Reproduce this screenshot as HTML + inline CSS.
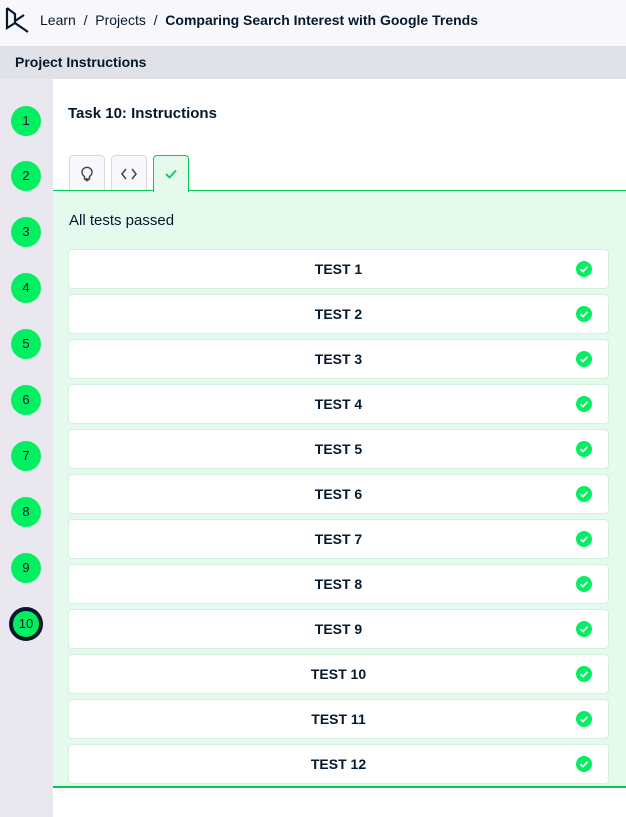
<!DOCTYPE html>
<html><head><style>
*{box-sizing:border-box;margin:0;padding:0}
body{width:626px;height:817px;overflow:hidden;font-family:"Liberation Sans",sans-serif;background:#fff;position:relative;color:#05192d}
.hdr{position:absolute;left:0;top:0;width:626px;height:46px;background:#f7f7fc}
.crumb{position:absolute;left:40px;top:12px;font-size:14px;color:#05192d}
.crumb b{font-weight:bold}
.sub{position:absolute;left:0;top:46px;width:626px;height:33px;background:#e1e1e8;font-size:14px;font-weight:bold;padding:8px 15px}
.side{position:absolute;left:0;top:79px;width:53px;height:738px;background:#e8e8ee}
.c{position:absolute;left:11px;width:30px;height:30px;border-radius:50%;background:#03ef62;font-size:13px;text-align:center;line-height:30px;color:#05192d}
.c.a{left:9px;width:34px;height:34px;border:4px solid #05192d;line-height:26px}
.title{position:absolute;left:68px;top:105px;font-size:15px;font-weight:bold}
.tab{position:absolute;top:155px;width:36px;height:36px;border:1px solid #d9d9e2;border-bottom:none;border-radius:4px 4px 0 0;background:#f7f7fc;display:flex;align-items:center;justify-content:center}
.tab.on{background:#e4faec;border-color:#03ca55;height:37px;z-index:2}
.panel{position:absolute;left:53px;top:190px;width:573px;height:598px;background:#e4faec;border-top:1px solid #03ca55;border-bottom:2px solid #03ca55}
.pass{position:absolute;left:69px;top:212px;font-size:15px}
.row{position:absolute;left:68px;width:541px;height:40px;background:#fff;border:1px solid #d8eedf;border-radius:4px;font-size:14px;font-weight:bold;text-align:center;line-height:38px}
.ck{position:absolute;left:507px;top:11px}
</style></head><body>
<div class="hdr">
<svg style="position:absolute;left:4px;top:6px" width="26" height="30" viewBox="0 0 26 30"><path d="M3 2V22L11 17 M3 2L11 8V17L24 26 M11 15L20 9" fill="none" stroke="#05192d" stroke-width="2.2"/></svg>
<div class="crumb">Learn &nbsp;/&nbsp; Projects &nbsp;/&nbsp; <b>Comparing Search Interest with Google Trends</b></div>
</div>
<div class="sub">Project Instructions</div>
<div class="side"></div>
<div class="c" style="top:106px">1</div>
<div class="c" style="top:161px">2</div>
<div class="c" style="top:217px">3</div>
<div class="c" style="top:273px">4</div>
<div class="c" style="top:329px">5</div>
<div class="c" style="top:385px">6</div>
<div class="c" style="top:441px">7</div>
<div class="c" style="top:497px">8</div>
<div class="c" style="top:553px">9</div>
<div class="c a" style="top:607px">10</div>
<div class="title">Task 10: Instructions</div>
<div class="tab" style="left:69px"><svg width="14" height="16" viewBox="0 0 14 16"><path d="M4.5 10.5C3 9.5 2 8 2 6.3A5 5 0 0 1 12 6.3C12 8 11 9.5 9.5 10.5V13H4.5Z M5.5 14.5H8.5" fill="none" stroke="#444" stroke-width="1.4"/></svg></div>
<div class="tab" style="left:111px"><svg width="16" height="12" viewBox="0 0 16 12"><path d="M5 1L1 6L5 11 M11 1L15 6L11 11" fill="none" stroke="#444" stroke-width="1.5"/></svg></div>
<div class="tab on" style="left:153px"><svg width="14" height="12" viewBox="0 0 14 12"><path d="M2 6L5.5 9.5L12 2.5" fill="none" stroke="#03ca55" stroke-width="1.8"/></svg></div>
<div class="panel"></div>
<div class="pass">All tests passed</div>
<div id="rows"></div>
<script>
var h='';for(var i=0;i<12;i++){h+='<div class="row" style="top:'+(249+45*i)+'px">TEST '+(i+1)+'<svg class="ck" width="16" height="16" viewBox="0 0 16 16"><circle cx="8" cy="8" r="8" fill="#03ef62"/><path d="M4.5 8.3L7 10.5L11.5 5.8" fill="none" stroke="#fff" stroke-width="1.8"/></svg></div>';}
document.getElementById('rows').innerHTML=h;
</script>
</body></html>
